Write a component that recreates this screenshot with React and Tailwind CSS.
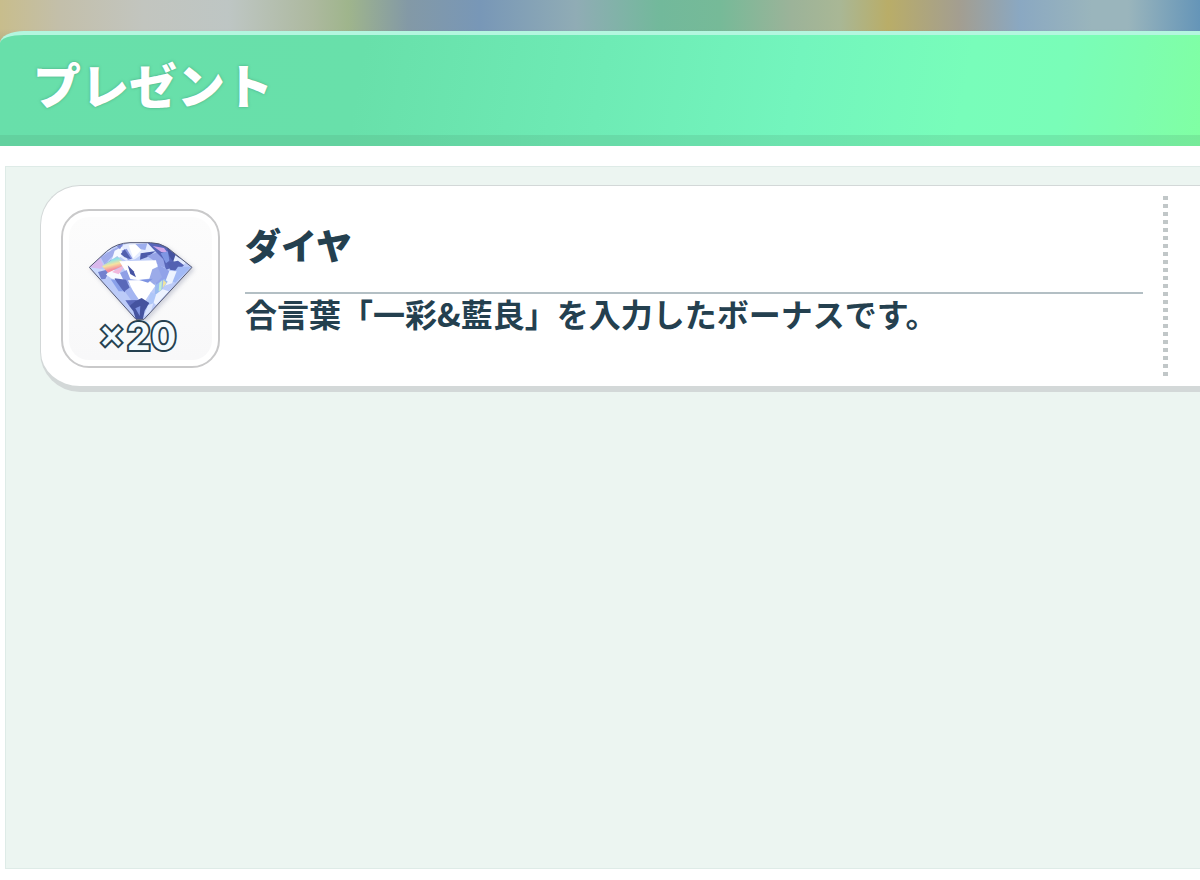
const presents = [
  {
    id: 1,
    name: "ダイヤ",
    count: 20,
    note: "合言葉「一彩&藍良」を入力したボーナスです。",
  },
];

function Diamond() {
  return (
    <svg
      viewBox="24 33 318 240"
      className="h-20 w-[106px] drop-shadow-[2px_2px_2px_rgba(70,80,120,0.25)]"
      aria-hidden="true"
    >
      <defs>
        <clipPath id="gem">
          <path d="M28 112 L80 64 Q110 39 150 38 L212 38 Q238 38 262 53 L336 112 L192 268 L168 268 Z" />
        </clipPath>
        <linearGradient id="prism" x1="0" y1="0" x2="0.35" y2="1">
          <stop offset="0.1" stopColor="#c9a5ee" />
          <stop offset="0.35" stopColor="#8fe3e6" />
          <stop offset="0.6" stopColor="#f6e3a0" />
          <stop offset="0.85" stopColor="#f58fa0" />
        </linearGradient>
      </defs>
      <g clipPath="url(#gem)">
        <rect x="20" y="30" width="330" height="250" fill="#bccbf8" />
        <path fill="#e6edff" d="M80 64 L150 38 L212 38 L240 60 L190 70 L165 88 L138 92 L110 74Z" />
        <path fill="#d9b8ec" d="M28 112 L60 84 L70 106 L54 126Z" />
        <path fill="#a0aceb" d="M62 82 L98 58 L130 44 L118 64 L92 84 L74 104Z" />
        <path fill="#f6f9ff" d="M104 62 L126 50 L132 66 L120 82 L96 88Z" />
        <path fill="#7c8ad6" d="M110 48 L130 40 L120 58Z" />
        <path fill="#8794df" d="M124 62 L140 56 L158 86 L144 90Z" />
        <path fill="#5260ae" d="M134 58 L154 88 L134 82 L122 72Z" />
        <path fill="#ffffff" d="M146 46 L174 42 L184 60 L160 84Z" />
        <path fill="#9daeee" d="M166 42 L202 40 L196 60 L182 58Z" />
        <path fill="#4c5aaa" d="M182 70 L226 64 L204 80 L180 89Z" />
        <path fill="#95a3e7" d="M200 78 L232 67 L256 92 L266 118 L236 106 L216 88Z" />
        <path fill="#5866b9" d="M202 38 L242 40 L268 58 L286 78 L276 112 L258 120 L250 88 L228 66Z" />
        <path fill="#d0a7e9" d="M218 48 L252 54 L264 70 L244 66Z" />
        <path fill="#7f96e4" d="M242 70 L264 64 L268 92 L258 100Z" />
        <path fill="#4553a1" d="M260 52 L302 86 L280 96 L268 78Z" />
        <path fill="#e5edff" d="M286 76 L318 98 L300 112 L280 94Z" />
        <path fill="#5361b2" d="M262 98 L294 92 L312 106 L294 123 L270 119Z" />
        <path fill="#a2b9f5" d="M294 110 L334 110 L286 158 L266 150Z" />
        <path fill="#edf3ff" d="M258 122 L290 124 L276 160 L250 168Z" />
        <path fill="#91a2e9" d="M234 103 L268 123 L252 164 L226 168Z" />
        <path fill="#c9d8fd" d="M28 112 L86 120 L82 146 L58 144Z" />
        <path fill="#7381ce" d="M54 126 L92 116 L76 147 L64 148Z" />
        <path fill="#f7faff" d="M78 134 L92 116 L126 132 L148 154 L96 146Z" />
        <path fill="#6472c0" d="M78 101 L94 90 L106 104 L86 111Z" />
        <path fill="url(#prism)" d="M66 109 L112 78 L136 104 L84 128Z" />
        <path fill="#f1b9dd" d="M96 126 L136 105 L116 133Z" />
        <path fill="#ffffff" d="M118 94 L228 91 L234 116 L216 145 L174 150 L150 146 L138 126Z" />
        <path fill="#4553a3" d="M143 106 L161 124 L168 142 L151 132Z" />
        <path fill="#8f9fe6" d="M120 129 L140 120 L151 148 L178 154 L156 165 L132 154Z" />
        <path fill="#9babe9" d="M217 118 L233 110 L246 142 L222 165 L207 149Z" />
        <path fill="#5968b9" d="M104 145 L138 149 L150 174 L134 187 L109 164Z" />
        <path fill="#89a0ea" d="M92 148 L106 150 L130 184 L116 184Z" />
        <path fill="#ffffff" d="M144 151 L205 151 L226 167 L206 196 L190 221 L171 209Z" />
        <path fill="#7d93e1" d="M178 150 L218 146 L204 158Z" />
        <path fill="#9abcf0" d="M226 166 L253 146 L263 155 L244 181 L224 196Z" />
        <path fill="#c3efd0" d="M238 159 L246 151 L244 180 L236 184Z" />
        <path fill="#f1e49e" d="M250 150 L259 158 L248 175Z" />
        <path fill="#edf3ff" d="M226 195 L248 178 L266 184 L228 225 L216 214Z" />
        <path fill="#aec6f8" d="M212 187 L228 194 L216 233 L196 245Z" />
        <path fill="#a4b5f1" d="M134 184 L151 171 L176 208 L158 217Z" />
        <path fill="#5b69ba" d="M136 211 L171 210 L164 226 L148 228Z" />
        <path fill="#45539f" d="M168 212 L185 204 L208 219 L194 242 L188 270 L168 270 L160 244 L148 228Z" />
        <path fill="#7e92df" d="M166 235 L181 228 L179 258Z" />
        <path fill="#dbe5ff" d="M204 226 L220 220 L212 248 L192 258Z" />
      </g>
      <path
        d="M28 112 L80 64 Q110 39 150 38 L212 38 Q238 38 262 53 L336 112 L192 268 L168 268 Z"
        fill="none"
        stroke="#535873"
        strokeWidth="3"
        strokeLinejoin="round"
      />
    </svg>
  );
}

function PresentRow({ item }) {
  return (
    <li className="flex rounded-l-[40px] border-y border-l border-b-[6px] border-[#d3d8d8] bg-white">
      <div className="mt-[23px] mb-[18px] ml-5 shrink-0 rounded-[28px] border-2 border-[#c9c9ca] bg-white p-1.5">
        <div className="relative flex h-[143px] w-[143px] justify-center rounded-[20px] bg-linear-to-b from-[#fcfcfc] to-[#f8f8f9] pt-6">
          <Diamond />
          <p className="absolute inset-x-0 bottom-1.5 flex items-center justify-center gap-1 pr-1 font-['Inter',sans-serif] text-[38px] leading-9 font-bold text-[#f3fbff] [-webkit-text-stroke:4px_#24404f] [paint-order:stroke_fill]">
            <span className="font-['Liberation_Sans',sans-serif]">×</span>
            <span>{item.count}</span>
          </p>
        </div>
      </div>
      <div className="ml-[25px] min-w-0 flex-1 pt-[34px]">
        <h2 className="h-[72px] text-[36px] leading-12 font-black">{item.name}</h2>
        <p className="border-t-2 border-[#b3bfc4] text-[32px] leading-[38px] font-bold">
          {item.note}
        </p>
      </div>
      <div className="mt-2.5 mb-1.5 ml-5 w-[5px] bg-[repeating-linear-gradient(to_bottom,#c1c7c8_0px,#c1c7c8_4px,transparent_4px,transparent_8px)]" />
      <div className="w-8 shrink-0" />
    </li>
  );
}

export default function App() {
  return (
    <div className="flex min-h-screen flex-col bg-white font-['Noto_Sans_CJK_JP',sans-serif] text-[#24404f]">
      <div className="bg-[linear-gradient(to_bottom,transparent_60%,rgba(70,80,70,0.18)),linear-gradient(to_right,#c8bd8c_0%,#c3bfaa_5%,#c2c5bf_12%,#bec6c4_19%,#adb99f_26%,#9fb58c_29%,#8399a6_34%,#7897b7_40%,#90acb5_48%,#72b99b_55%,#76ba98_60%,#9cb399_66%,#a9b795_70%,#b9ad68_74%,#a39e91_80%,#8aa8c2_85%,#9ab5bc_91%,#9ab5bc_94%,#6595b8_100%)] bg-[length:100%_48px,100%_64px] bg-no-repeat pt-[31px]">
        <header className="rounded-tl-[24px_12px] border-t-4 border-[#b3f6df] bg-[linear-gradient(100deg,#68dfaa_0%,#68e0aa_30%,#6eebb5_50%,#73f5bd_66%,#78fdba_80%,#79fdb8_88%,#7dfdaf_94%,#80ffa3_100%)]">
          <h1 className="border-b-[11px] border-[#509b7433] pt-4 pb-5 pl-[33px] text-[48px] leading-16 font-black text-white [text-shadow:0_0_3px_rgba(65,150,115,0.75)]">
            プレゼント
          </h1>
        </header>
      </div>
      <main className="mt-5 mb-[11px] ml-[5px] flex-1 border border-r-0 border-[#deebe7] bg-[#ecf5f1]">
        <ul className="mt-[18px] ml-[34px]">
          {presents.map((item) => (
            <PresentRow key={item.id} item={item} />
          ))}
        </ul>
      </main>
    </div>
  );
}
